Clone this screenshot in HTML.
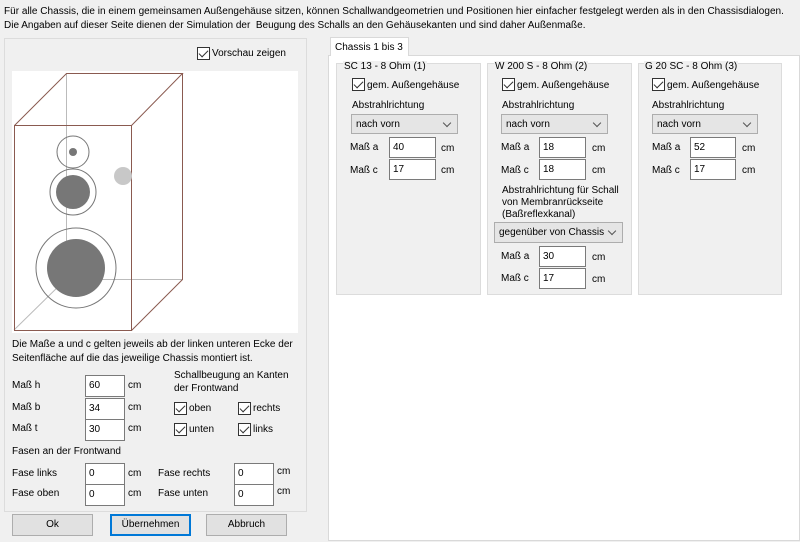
<!DOCTYPE html><html><head><meta charset="utf-8"><style>
*{box-sizing:border-box}
body{margin:0;width:800px;height:542px;background:#f0f0f0;font-family:"Liberation Sans",sans-serif;font-size:10px;color:#000;position:relative;overflow:hidden}
.a{position:absolute;white-space:nowrap}
.in{position:absolute;background:#fff;border:1px solid #7a7a7a;padding:4px 3px;font-size:10px}
.cb{position:absolute;width:13px;height:13px;border:1px solid #333;background:#fff}
.cb:after{content:"";position:absolute;left:3px;top:0px;width:4px;height:8px;border:solid #333;border-width:0 1.5px 1.5px 0;transform:rotate(45deg)}
.combo{position:absolute;background:#e5e5e5;border:1px solid #adadad;padding:4px 4px;font-size:10px;white-space:nowrap}
.combo:after{content:"";position:absolute;right:7px;top:5px;width:5px;height:5px;border:solid #555;border-width:0 1px 1px 0;transform:rotate(45deg)}
.grp{position:absolute;background:#f0f0f0;border:1px solid #dcdcdc}
.btn{position:absolute;background:#e1e1e1;border:1px solid #adadad;text-align:center;line-height:19px;font-size:10px}
</style></head><body>
<div class="a" style="left:4px;top:6px;letter-spacing:0.02px">Für alle Chassis, die in einem gemeinsamen Außengehäuse sitzen, können Schallwandgeometrien und Positionen hier einfacher festgelegt werden als in den Chassisdialogen.</div>
<div class="a" style="left:4px;top:20px">Die Angaben auf dieser Seite dienen der Simulation der &nbsp;Beugung des Schalls an den Gehäusekanten und sind daher Außenmaße.</div>

<div style="position:absolute;left:4px;top:38px;width:303px;height:474px;border:1px solid #dcdcdc"></div>
<div class="cb" style="left:197px;top:47px"></div><div class="a" style="left:212px;top:48px">Vorschau zeigen</div>
<svg style="position:absolute;left:12px;top:71px" width="286" height="262" viewBox="12 71 286 262">
<rect x="12" y="71" width="286" height="262" fill="#fff"/>
<g stroke="#bbb" stroke-width="1" fill="none"><path d="M66.5 73V279.5H182M14 330L66 279"/></g>
<g stroke="#8a5a50" stroke-width="1" fill="none"><rect x="14.5" y="125.5" width="117" height="205"/><path d="M14.5 125.5L66.5 73.5H182.5L131.5 125.5M182.5 73.5V279.5L131.5 330.5"/></g>
<circle cx="123" cy="176" r="9" fill="#c8c8c8"/>
<g stroke="#777" fill="none"><circle cx="73" cy="152" r="16"/><circle cx="73" cy="192" r="23"/><circle cx="76" cy="268" r="40"/></g>
<g fill="#777"><circle cx="73" cy="152" r="4"/><circle cx="73" cy="192" r="17"/><circle cx="76" cy="268" r="29"/></g>
</svg>
<div class="a" style="left:12px;top:339px">Die Maße a und c gelten jeweils ab der linken unteren Ecke der</div>
<div class="a" style="left:12px;top:353px">Seitenfläche auf die das jeweilige Chassis montiert ist.</div>
<div class="a" style="left:12px;top:380px">Maß h</div><div class="in" style="left:85px;top:375px;width:40px;height:22px">60</div><div class="a" style="left:128px;top:380px">cm</div>
<div class="a" style="left:12px;top:402px">Maß b</div><div class="in" style="left:85px;top:398px;width:40px;height:22px">34</div><div class="a" style="left:128px;top:402px">cm</div>
<div class="a" style="left:12px;top:423px">Maß t</div><div class="in" style="left:85px;top:419px;width:40px;height:22px">30</div><div class="a" style="left:128px;top:423px">cm</div>
<div class="a" style="left:174px;top:370px">Schallbeugung an Kanten</div><div class="a" style="left:174px;top:383px">der Frontwand</div>
<div class="cb" style="left:174px;top:402px"></div><div class="a" style="left:189px;top:403px">oben</div>
<div class="cb" style="left:238px;top:402px"></div><div class="a" style="left:253px;top:403px">rechts</div>
<div class="cb" style="left:174px;top:423px"></div><div class="a" style="left:189px;top:424px">unten</div>
<div class="cb" style="left:238px;top:423px"></div><div class="a" style="left:253px;top:424px">links</div>
<div class="a" style="left:12px;top:446px">Fasen an der Frontwand</div>
<div class="a" style="left:12px;top:468px">Fase links</div><div class="in" style="left:85px;top:463px;width:40px;height:22px">0</div><div class="a" style="left:128px;top:468px">cm</div>
<div class="a" style="left:158px;top:468px">Fase rechts</div><div class="in" style="left:234px;top:463px;width:40px;height:22px">0</div><div class="a" style="left:277px;top:466px">cm</div>
<div class="a" style="left:12px;top:488px">Fase oben</div><div class="in" style="left:85px;top:484px;width:40px;height:22px">0</div><div class="a" style="left:128px;top:488px">cm</div>
<div class="a" style="left:158px;top:488px">Fase unten</div><div class="in" style="left:234px;top:484px;width:40px;height:22px">0</div><div class="a" style="left:277px;top:486px">cm</div>
<div class="btn" style="left:12px;top:514px;width:81px;height:22px">Ok</div>
<div class="btn" style="left:110px;top:514px;width:81px;height:22px;border:2px solid #0078d7;line-height:17px">Übernehmen</div>
<div class="btn" style="left:206px;top:514px;width:81px;height:22px">Abbruch</div>

<div style="position:absolute;left:328px;top:55px;width:472px;height:486px;background:#fff;border:1px solid #d9d9d9"></div>
<div style="position:absolute;left:330px;top:37px;width:79px;height:19px;background:#fff;border:1px solid #d9d9d9;border-bottom:none;padding:4px 4px;white-space:nowrap">Chassis 1 bis 3</div>

<div class="grp" style="left:336px;top:63px;width:145px;height:232px"></div>
<div class="grp" style="left:487px;top:63px;width:145px;height:232px"></div>
<div class="grp" style="left:638px;top:63px;width:144px;height:232px"></div>

<div class="a" style="left:343px;top:61px;background:#f0f0f0;padding:0 1px">SC 13 - 8 Ohm (1)</div>
<div class="cb" style="left:352px;top:78px"></div><div class="a" style="left:367px;top:80px">gem. Außengehäuse</div>
<div class="a" style="left:352px;top:100px">Abstrahlrichtung</div>
<div class="combo" style="left:351px;top:114px;width:107px;height:20px">nach vorn</div>
<div class="a" style="left:350px;top:142px">Maß a</div><div class="in" style="left:389px;top:137px;width:47px;height:21px">40</div><div class="a" style="left:441px;top:143px">cm</div>
<div class="a" style="left:350px;top:165px">Maß c</div><div class="in" style="left:389px;top:159px;width:47px;height:21px">17</div><div class="a" style="left:441px;top:165px">cm</div>

<div class="a" style="left:494px;top:61px;background:#f0f0f0;padding:0 1px">W 200 S - 8 Ohm (2)</div>
<div class="cb" style="left:502px;top:78px"></div><div class="a" style="left:517px;top:80px">gem. Außengehäuse</div>
<div class="a" style="left:502px;top:100px">Abstrahlrichtung</div>
<div class="combo" style="left:501px;top:114px;width:107px;height:20px">nach vorn</div>
<div class="a" style="left:501px;top:142px">Maß a</div><div class="in" style="left:539px;top:137px;width:47px;height:21px">18</div><div class="a" style="left:592px;top:143px">cm</div>
<div class="a" style="left:501px;top:165px">Maß c</div><div class="in" style="left:539px;top:159px;width:47px;height:21px">18</div><div class="a" style="left:592px;top:165px">cm</div>
<div class="a" style="left:502px;top:185px">Abstrahlrichtung für Schall</div>
<div class="a" style="left:502px;top:197px">von Membranrückseite</div>
<div class="a" style="left:502px;top:209px">(Baßreflexkanal)</div>
<div class="combo" style="left:494px;top:222px;width:129px;height:21px">gegenüber von Chassis</div>
<div class="a" style="left:501px;top:251px">Maß a</div><div class="in" style="left:539px;top:246px;width:47px;height:21px">30</div><div class="a" style="left:592px;top:252px">cm</div>
<div class="a" style="left:501px;top:273px">Maß c</div><div class="in" style="left:539px;top:268px;width:47px;height:21px">17</div><div class="a" style="left:592px;top:274px">cm</div>

<div class="a" style="left:644px;top:61px;background:#f0f0f0;padding:0 1px">G 20 SC - 8 Ohm (3)</div>
<div class="cb" style="left:652px;top:78px"></div><div class="a" style="left:667px;top:80px">gem. Außengehäuse</div>
<div class="a" style="left:652px;top:100px">Abstrahlrichtung</div>
<div class="combo" style="left:652px;top:114px;width:106px;height:20px">nach vorn</div>
<div class="a" style="left:652px;top:142px">Maß a</div><div class="in" style="left:690px;top:137px;width:46px;height:21px">52</div><div class="a" style="left:742px;top:143px">cm</div>
<div class="a" style="left:652px;top:165px">Maß c</div><div class="in" style="left:690px;top:159px;width:46px;height:21px">17</div><div class="a" style="left:742px;top:165px">cm</div>
</body></html>
